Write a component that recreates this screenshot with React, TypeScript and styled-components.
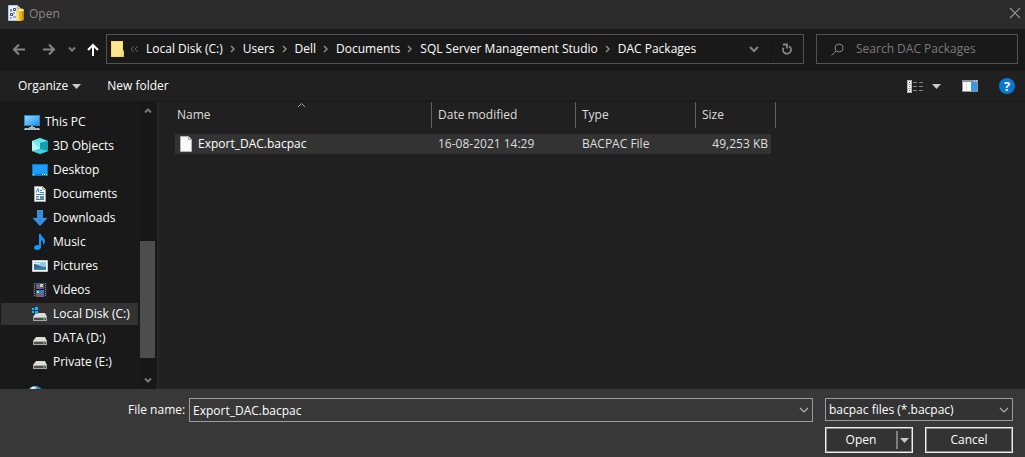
import React from "react";
import styled, { createGlobalStyle } from "styled-components";

const GlobalStyle = createGlobalStyle`
  *, *::before, *::after { box-sizing: border-box; }
  html, body, #root { height: 100%; }
  body {
    margin: 0;
    background: #191919;
    color: #ffffff;
    font: 12px/16px "Open Sans", "Noto Sans", sans-serif;
  }
  button, input, select { font: inherit; color: inherit; margin: 0; }
  button {
    display: flex;
    align-items: center;
    justify-content: center;
    padding: 0;
    border: 0;
    background: none;
  }
  svg { display: block; flex: none; }
`;

const Dialog = styled.div`
  display: flex;
  flex-direction: column;
  min-height: 100%;
`;

const TitleBar = styled.header`
  display: flex;
  align-items: center;
  height: 29px;
  padding: 0 4px 3px 8px;
  gap: 5px;
  background: #2b2b2b;
  color: #878787;
`;

const Title = styled.h1`
  flex: 1;
  margin: 0;
  padding-top: 2px;
  font-size: 12px;
  line-height: 16px;
  font-weight: 400;
`;

const NavBar = styled.nav`
  display: flex;
  align-items: center;
  height: 42px;
  padding: 0 7px 2px 4px;
  background: #191919;
`;

const NavButton = styled.button<{ $w: number }>`
  width: ${(p) => p.$w}px;
  height: 30px;
`;

const AddressBar = styled.div`
  display: flex;
  align-items: center;
  flex: 1;
  min-width: 0;
  height: 30px;
  padding-left: 4px;
  border: 1px solid #535353;
`;

const Crumbs = styled.ol`
  display: flex;
  align-items: center;
  flex: 1;
  min-width: 0;
  margin: 0;
  padding: 0 0 0 5px;
  list-style: none;
`;

const Crumb = styled.li`
  display: flex;
  align-items: center;
  white-space: nowrap;

  a {
    color: #ffffff;
    text-decoration: none;
  }
`;

const CrumbMark = styled.span`
  display: flex;
  justify-content: center;
  width: 20px;
`;

const OverflowMark = styled.span`
  width: 16px;
`;

const RefreshButton = styled.button`
  width: 33px;
  height: 28px;
  border-left: 1px solid #131313;
`;

const SearchBox = styled.label`
  display: flex;
  align-items: center;
  width: 202px;
  height: 30px;
  margin-left: 12px;
  padding: 0 14px;
  gap: 12px;
  border: 1px solid #535353;

  input {
    flex: 1;
    min-width: 0;
    padding: 0;
    border: 0;
    outline: 0;
    background: none;
  }
  input::placeholder { color: #7a7a7a; opacity: 1; }
`;

const Toolbar = styled.div`
  display: flex;
  align-items: center;
  height: 31px;
  padding: 0 10px 0 18px;
  gap: 26px;
  background: #202020;
  border-bottom: 1px solid #191919;
`;

const ToolButton = styled.button<{ $gap?: number }>`
  gap: ${(p) => p.$gap ?? 0}px;
  height: 28px;
`;

const ToolGroup = styled.div`
  display: flex;
  align-items: center;
  margin-left: auto;
  gap: 21px;
`;

const HelpBadge = styled.button`
  width: 16px;
  height: 16px;
  border-radius: 50%;
  background: #0878d4;
  font-size: 13px;
  font-weight: 700;
`;

const Body = styled.div`
  display: flex;
  flex: 1;
  min-height: 0;
`;

const Sidebar = styled.aside`
  display: flex;
  width: 159px;
  background: #191919;
  border-right: 2px solid #272727;
`;

const Tree = styled.ul`
  flex: 1;
  height: 287px;
  margin: 0;
  padding: 9px 2px 0 1px;
  overflow: hidden;
  list-style: none;
`;

const TreeItem = styled.li<{ $level: number; $selected?: boolean }>`
  height: 22px;
  margin-bottom: 2px;
  padding-left: ${(p) => 15 + p.$level * 8}px;
  background: ${(p) => (p.$selected ? "#333333" : "transparent")};

  a {
    display: flex;
    align-items: center;
    height: 22px;
    gap: 5px;
    color: #ffffff;
    text-decoration: none;
    white-space: nowrap;
  }
`;

const NetworkItem = styled.li`
  padding: 11px 0 0 27px;
`;

const ScrollBar = styled.div`
  display: flex;
  flex-direction: column;
  width: 15px;
  margin-right: 2px;
  background: #171717;
`;

const ScrollButton = styled.button`
  width: 15px;
  height: 17px;
`;

const ScrollTrack = styled.div`
  display: flex;
  flex-direction: column;
  justify-content: flex-end;
  flex: 1;
  padding-bottom: 14px;
`;

const ScrollThumb = styled.div`
  height: 49%;
  background: #4d4d4d;
`;

const Files = styled.main`
  flex: 1;
  min-width: 0;
  padding-left: 16px;
  background: #202020;
`;

const FileTable = styled.table`
  width: 601px;
  table-layout: fixed;
  border-spacing: 0;
`;

const HeadCell = styled.th`
  position: relative;
  height: 26px;
  padding: 0 0 0 6px;
  border-right: 1px solid #636363;
  color: #dedede;
  font-weight: 400;
  text-align: left;

  &:first-child { padding-left: 2px; }
`;

const SortMark = styled.span`
  position: absolute;
  top: 0;
  left: calc(50% - 6px);
`;

const GapRow = styled.tr`
  height: 6px;

  td { padding: 0; }
`;

const Cell = styled.td<{ $right?: boolean }>`
  height: 20px;
  padding: ${(p) => (p.$right ? "0 3px 0 0" : "0 0 0 6px")};
  background: #333333;
  color: #dedede;
  text-align: ${(p) => (p.$right ? "right" : "left")};
  white-space: nowrap;
`;

const NameCell = styled(Cell)`
  padding-left: 3px;
`;

const FileName = styled.span`
  display: flex;
  align-items: center;
  gap: 4px;
  color: #ffffff;
`;

const Footer = styled.footer`
  display: flex;
  padding: 9px 12px 4px 128px;
  gap: 12px;
  background: #383838;
`;

const NameField = styled.div`
  display: flex;
  align-items: center;
  align-self: flex-start;
  flex: 1;
  min-width: 0;

  label { width: 61px; white-space: nowrap; }
`;

const ComboBox = styled.div`
  display: flex;
  flex: 1;
  min-width: 0;
  height: 24px;
  border: 1px solid #9b9b9b;

  input {
    flex: 1;
    min-width: 0;
    padding: 2px 3px 0;
    border: 0;
    outline: 0;
    background: none;
  }
  button { width: 16px; }
`;

const Actions = styled.div`
  display: flex;
  flex-direction: column;
  width: 188px;
  gap: 6px;
`;

const SelectBox = styled.div`
  display: grid;
  align-items: center;
  height: 23px;
  border: 1px solid #9b9b9b;
  background: #333333;

  select, svg { grid-area: 1 / 1; }
  select {
    width: 100%;
    height: 21px;
    padding: 0 20px 0 3px;
    border: 0;
    outline: 0;
    appearance: none;
    background: #333333;
  }
  svg { justify-self: end; margin-right: 3px; pointer-events: none; }
`;

const ButtonRow = styled.div`
  display: grid;
  grid-template-columns: 1fr 1fr;
  gap: 12px;
`;

const ButtonFrame = styled.div`
  display: flex;
  height: 26px;
  border: 1px solid #f0f0f0;
  outline: 1px solid #8a8a8a;
  outline-offset: -2px;
  background: #333333;
`;

const ActionButton = styled.button`
  flex: 1;
`;

const SplitButton = styled.button`
  width: 16px;
  height: 18px;
  margin: 3px 0;
  padding-right: 2px;
  border-left: 2px solid #7f7f7f;
`;

const Pic = ({ w = 16, h = 16, children }: { w?: number; h?: number; children: React.ReactNode }) => (
  <svg width={w} height={h} viewBox={`0 0 ${w} ${h}`} aria-hidden="true">
    {children}
  </svg>
);

const Caret = () => (
  <Pic w={9} h={5}>
    <path d="M0 0h9L4.500 5z" fill="#c8c8c8" />
  </Pic>
);

const ChevronDown = () => (
  <Pic w={10} h={6}>
    <path d="M1 1l4 4 4-4" fill="none" stroke="#b0b0b0" strokeWidth="1.200" />
  </Pic>
);

const BoldChevron = ({ up = false }: { up?: boolean }) => (
  <Pic w={8} h={7}>
    <path d={up ? "M1 5.500l3-3 3 3" : "M1 1.500l3 3 3-3"} fill="none" stroke="#777777" strokeWidth="2" />
  </Pic>
);

const Arrow = ({ dir, color }: { dir: "left" | "right" | "up"; color: string }) => {
  const d = {
    left: "M13 7.500H2M7 2.500l-5 5 5 5",
    right: "M1 7.500h11M7 2.500l5 5-5 5",
    up: "M7 14V3M2 8l5-5 5 5",
  }[dir];
  return (
    <Pic w={14} h={15}>
      <path d={d} fill="none" stroke={color} strokeWidth="2" />
    </Pic>
  );
};

const AppIcon = () => (
  <Pic>
    <path d="M.5.500h9l3 3v12H.500z" fill="#e9effa" stroke="#b4c3de" />
    <path d="M9.500.500v3h3" fill="#c5d3ec" stroke="#9db0d2" />
    <path d="M5.500 3.500h2v2h-2zM2.500 8.500h2v2h-2z" fill="#fff" stroke="#30466e" />
    <path d="M2 5h2M3 4v3M6 7v2M5 12h3M2 13h2" fill="none" stroke="#536b96" />
    <path d="M8 5v9c0 2.500 8 2.500 8 0V5z" fill="#f0b51a" />
    <path d="M8 5v9c0 1 1 1.500 3 1.800V5z" fill="#ffe27a" />
    <path d="M14 5v10.400c1-.3 2-.8 2-1.400V5z" fill="#c98700" />
    <ellipse cx="12" cy="5.200" rx="4" ry="1.600" fill="#fff0a8" stroke="#d69a0c" strokeWidth=".6" />
  </Pic>
);

const FolderIcon = () => (
  <Pic w={14} h={16}>
    <path d="M0 0h12v9l1 1v6H0z" fill="#fbd867" />
    <path d="M1 1h10v14H1z" fill="#ffe58f" />
    <path d="M11 10h2v6h-3z" fill="#f4c63d" />
    <path d="M11 11h1v3h-1z" fill="#fff0b5" />
  </Pic>
);

const PcIcon = () => (
  <Pic>
    <defs>
      <linearGradient id="pc" x1="0" y1="0" x2="1" y2="1">
        <stop offset="0" stopColor="#8fd8ff" />
        <stop offset="1" stopColor="#1995f2" />
      </linearGradient>
    </defs>
    <path d="M0 1h16v11H0z" fill="#3485b4" />
    <path d="M1 2h14v9H1z" fill="url(#pc)" />
    <path d="M7 12h2v1h2v1H5v-1h2z" fill="#a9c0cc" />
    <path d="M1 14h14l1 2H0z" fill="#c2d1d9" />
    <path d="M2 15h12" stroke="#6d7d86" strokeWidth=".6" />
  </Pic>
);

const CubeIcon = () => (
  <Pic>
    <path d="M0 3l8-3 8 3v10l-8 3-8-3z" fill="#1fb0c2" />
    <path d="M0 3l8-3 8 3-8 2z" fill="#6fe3ea" />
    <path d="M0 3l8 2v6l-8 2z" fill="#b5f7f6" />
    <path d="M16 3L8 5v6l8 2z" fill="#149eb2" />
    <path d="M0 13l8-2 8 2-8 3z" fill="#3fd0dc" />
    <path d="M0 3l8 2v6z" fill="#7ee9ec" />
  </Pic>
);

const DesktopIcon = () => (
  <Pic>
    <path d="M0 2h16v12H0z" fill="#0578d0" />
    <path d="M1 3h14v9H1z" fill="#1d9bf8" />
    <path d="M1 12.500h1.500M10 12.500h1M12 12.500h1M14 12.500h1" stroke="#e8f6ff" />
  </Pic>
);

const DocumentsIcon = () => (
  <Pic>
    <path d="M2.500.500h8l3 3v12h-11z" fill="#fafafa" stroke="#a5a5a5" />
    <path d="M10.500.500v3h3" fill="#ddd" stroke="#a5a5a5" />
    <path d="M4 6.500l2-4 1 4M8 4.500h2M8 6.500h4" fill="none" stroke="#258bd8" />
    <path d="M4 8.500h8M4 13.500h8" stroke="#2d83bd" />
    <path d="M4 10.500h3M4 12h3" stroke="#818181" />
    <path d="M8 10h4v3H8z" fill="#5c8c9d" />
  </Pic>
);

const DownloadsIcon = () => (
  <Pic>
    <path d="M5 0h6v8h4.500L8 16 .5 8H5z" fill="#3a96e8" />
    <path d="M6 0h4v9h3l-5 5-5-5h3z" fill="#348bdd" />
  </Pic>
);

const MusicIcon = () => (
  <Pic>
    <path d="M7 0h2c0 3 4 4 4 7 0 2-1 3-2 4 .5-3 0-4-2-5v7c0 2-2 3-4 3-2 0-3-1-3-2.500C2 12 4 10.500 7 11z" fill="#1599f4" />
  </Pic>
);

const PicturesIcon = () => (
  <Pic>
    <path d="M.5 2.500h15v11H.500z" fill="#fff" stroke="#c5c5c5" />
    <path d="M2 4h12v8H2z" fill="#8fcaf4" />
    <path d="M2 6c3 0 5 3 12 3v3H2z" fill="#38657c" />
    <path d="M2 10c4-1 7 0 12-1v3H2z" fill="#3383b2" />
    <path d="M2 5h6v1H2z" fill="#d8eefb" />
  </Pic>
);

const VideosIcon = () => (
  <Pic>
    <path d="M1 1h14v14H1z" fill="#292929" />
    <path d="M2.500 1v14M13.500 1v14" stroke="#8a8a8a" strokeDasharray="1 1" />
    <path d="M4 1h8v6H4z" fill="#345fb8" />
    <path d="M4 8h8v7H4z" fill="#287ed0" />
    <path d="M5 3h2v2H5zM7 5h2v2H7z" fill="#ce4e45" />
    <path d="M8 2h3v3H8zM5 9h2v2H5z" fill="#e7c746" />
    <path d="M4 12l3-1 2 2 3-3v3l-4 2H4z" fill="#8c5468" />
    <path d="M4 7.500h8" stroke="#161616" />
  </Pic>
);

const DriveIcon = ({ windows = false }: { windows?: boolean }) => (
  <Pic>
    <path d="M4 7h9l2 4H1z" fill="#dcdcdc" />
    <path d="M1 11h14v4H1z" fill="#a8a8a8" />
    <path d="M2 12h12v2H2z" fill="#4a4e4c" />
    <path d="M11 13h2" stroke="#37f248" />
    {windows && <path d="M0 2h2v2H0zM3 1h3v3H3zM0 5h2v2H0zM3 5h3v3H3z" fill="#12b8ff" />}
  </Pic>
);

const GlobeIcon = () => (
  <Pic>
    <circle cx="7" cy="7" r="7" fill="#8fc9e6" />
    <path d="M7 0c4 0 6 2 7 5l-4-1-2-3z" fill="#2f83b8" />
    <path d="M4 1l3 0-1 2-3 1z" fill="#dff3fb" />
  </Pic>
);

const FileIcon = () => (
  <Pic>
    <path d="M2.500.500h8l3 3v12h-11z" fill="#fafafa" stroke="#b5b5b5" />
    <path d="M10.500.500v3h3" fill="#dedede" stroke="#9a9a9a" />
  </Pic>
);

const ViewIcon = () => (
  <Pic h={13}>
    <path d="M0 0h5v13H0z" fill="#b4b4b4" />
    <path d="M1 1h3v3H1zM1 5h3v3H1zM1 9h3v3H1z" fill="#fff" />
    <path d="M2 2h1v1H2z" fill="#333" />
    <path d="M2 6h1v1H2z" fill="#168bd2" />
    <path d="M2 10h1v1H2z" fill="#c53028" />
    <path d="M6 2.500h4M12 2.500h4M6 6.500h4M12 6.500h4M6 10.500h4M12 10.500h4" stroke="#858585" />
  </Pic>
);

const PaneIcon = () => (
  <Pic h={12}>
    <path d="M0 0h16v12H0z" fill="#8d969d" />
    <path d="M1 2h8v9H1z" fill="#fff" />
    <path d="M4.500 2v9" stroke="#d5e3ed" />
    <path d="M9 2h6v9H9z" fill="#369ae8" />
    <path d="M12 1h1M14 1h1" stroke="#fff" />
  </Pic>
);

const crumbs = ["Local Disk (C:)", "Users", "Dell", "Documents", "SQL Server Management Studio", "DAC Packages"];

const places = [
  { name: "This PC", icon: <PcIcon />, level: 1 },
  { name: "3D Objects", icon: <CubeIcon />, level: 2 },
  { name: "Desktop", icon: <DesktopIcon />, level: 2 },
  { name: "Documents", icon: <DocumentsIcon />, level: 2 },
  { name: "Downloads", icon: <DownloadsIcon />, level: 2 },
  { name: "Music", icon: <MusicIcon />, level: 2 },
  { name: "Pictures", icon: <PicturesIcon />, level: 2 },
  { name: "Videos", icon: <VideosIcon />, level: 2 },
  { name: "Local Disk (C:)", icon: <DriveIcon windows />, level: 2, selected: true },
  { name: "DATA (D:)", icon: <DriveIcon />, level: 2 },
  { name: "Private (E:)", icon: <DriveIcon />, level: 2 },
];

export default function App() {
  return (
    <Dialog role="dialog" aria-labelledby="dialog-title">
      <GlobalStyle />
      <TitleBar>
        <AppIcon />
        <Title id="dialog-title">Open</Title>
        <button type="button" aria-label="Close">
          <Pic w={12} h={12}>
            <path d="M1 1l10 10M11 1L1 11" stroke="#969696" strokeWidth="1.200" />
          </Pic>
        </button>
      </TitleBar>

      <NavBar>
        <NavButton $w={30} type="button" aria-label="Back"><Arrow dir="left" color="#858585" /></NavButton>
        <NavButton $w={30} type="button" aria-label="Forward"><Arrow dir="right" color="#858585" /></NavButton>
        <NavButton $w={16} type="button" aria-label="Recent locations"><BoldChevron /></NavButton>
        <NavButton $w={26} type="button" aria-label="Up"><Arrow dir="up" color="#ffffff" /></NavButton>
        <AddressBar>
          <FolderIcon />
          <Crumbs>
            <Crumb>
              <OverflowMark>
                <Pic w={9} h={8}>
                  <path d="M4 1L1 4l3 3M8 1L5 4l3 3" fill="none" stroke="#5e5e5e" />
                </Pic>
              </OverflowMark>
            </Crumb>
            {crumbs.map((name, i) => (
              <Crumb key={name}>
                {i > 0 && (
                  <CrumbMark>
                    <Pic w={6} h={8}>
                      <path d="M1 1l3 3-3 3" fill="none" stroke="#8a8a8a" strokeWidth="1.500" />
                    </Pic>
                  </CrumbMark>
                )}
                <a href="#path">{name}</a>
              </Crumb>
            ))}
          </Crumbs>
          <NavButton $w={32} type="button" aria-label="Previous locations">
            <Pic w={10} h={7}><path d="M1 1l4 4 4-4" fill="none" stroke="#858585" strokeWidth="2" /></Pic>
          </NavButton>
          <RefreshButton type="button" aria-label="Refresh">
            <Pic w={12} h={12}>
              <path d="M8 3.200a4 4 0 1 1-5.500 1.500M2 1.500h4v4" fill="none" stroke="#8a8a8a" strokeWidth="1.800" />
            </Pic>
          </RefreshButton>
        </AddressBar>
        <SearchBox>
          <Pic w={13} h={13}>
            <circle cx="8" cy="5" r="4" fill="none" stroke="#858585" />
            <path d="M5 8l-4.500 4.500" stroke="#858585" />
          </Pic>
          <input type="search" aria-label="Search DAC Packages" placeholder="Search DAC Packages" />
        </SearchBox>
      </NavBar>

      <Toolbar>
        <ToolButton type="button" $gap={4}>Organize <Caret /></ToolButton>
        <ToolButton type="button">New folder</ToolButton>
        <ToolGroup>
          <ToolButton type="button" $gap={9} aria-label="Change view"><ViewIcon /><Caret /></ToolButton>
          <ToolButton type="button" aria-label="Preview pane"><PaneIcon /></ToolButton>
          <HelpBadge type="button" aria-label="Help">?</HelpBadge>
        </ToolGroup>
      </Toolbar>

      <Body>
        <Sidebar>
          <Tree>
            {places.map((p) => (
              <TreeItem key={p.name} $level={p.level} $selected={p.selected}>
                <a href="#place">{p.icon}{p.name}</a>
              </TreeItem>
            ))}
            <NetworkItem>
              <a href="#network" aria-label="Network"><GlobeIcon /></a>
            </NetworkItem>
          </Tree>
          <ScrollBar>
            <ScrollButton type="button" aria-label="Scroll up"><BoldChevron up /></ScrollButton>
            <ScrollTrack><ScrollThumb /></ScrollTrack>
            <ScrollButton type="button" aria-label="Scroll down"><BoldChevron /></ScrollButton>
          </ScrollBar>
        </Sidebar>

        <Files>
          <FileTable>
            <colgroup>
              <col width="257" />
              <col width="144" />
              <col width="120" />
              <col width="75" />
              <col width="5" />
            </colgroup>
            <thead>
              <tr>
                <HeadCell aria-sort="ascending">
                  Name
                  <SortMark>
                    <Pic w={9} h={6}><path d="M1 5l3.500-3.500L8 5" fill="none" stroke="#a0a0a0" /></Pic>
                  </SortMark>
                </HeadCell>
                <HeadCell>Date modified</HeadCell>
                <HeadCell>Type</HeadCell>
                <HeadCell colSpan={2}>Size</HeadCell>
              </tr>
            </thead>
            <tbody>
              <GapRow aria-hidden="true"><td colSpan={5} /></GapRow>
              <tr>
                <NameCell><FileName><FileIcon />Export_DAC.bacpac</FileName></NameCell>
                <Cell>16-08-2021 14:29</Cell>
                <Cell>BACPAC File</Cell>
                <Cell $right>49,253 KB</Cell>
              </tr>
            </tbody>
          </FileTable>
        </Files>
      </Body>

      <Footer>
        <NameField>
          <label htmlFor="file-name">File name:</label>
          <ComboBox>
            <input id="file-name" type="text" defaultValue="Export_DAC.bacpac" />
            <button type="button" aria-label="Show file names"><ChevronDown /></button>
          </ComboBox>
        </NameField>
        <Actions>
          <SelectBox>
            <select aria-label="File type" defaultValue="bacpac">
              <option value="bacpac">bacpac files (*.bacpac)</option>
            </select>
            <ChevronDown />
          </SelectBox>
          <ButtonRow>
            <ButtonFrame>
              <ActionButton type="button">Open</ActionButton>
              <SplitButton type="button" aria-label="More open options"><Caret /></SplitButton>
            </ButtonFrame>
            <ButtonFrame>
              <ActionButton type="button">Cancel</ActionButton>
            </ButtonFrame>
          </ButtonRow>
        </Actions>
      </Footer>
    </Dialog>
  );
}
